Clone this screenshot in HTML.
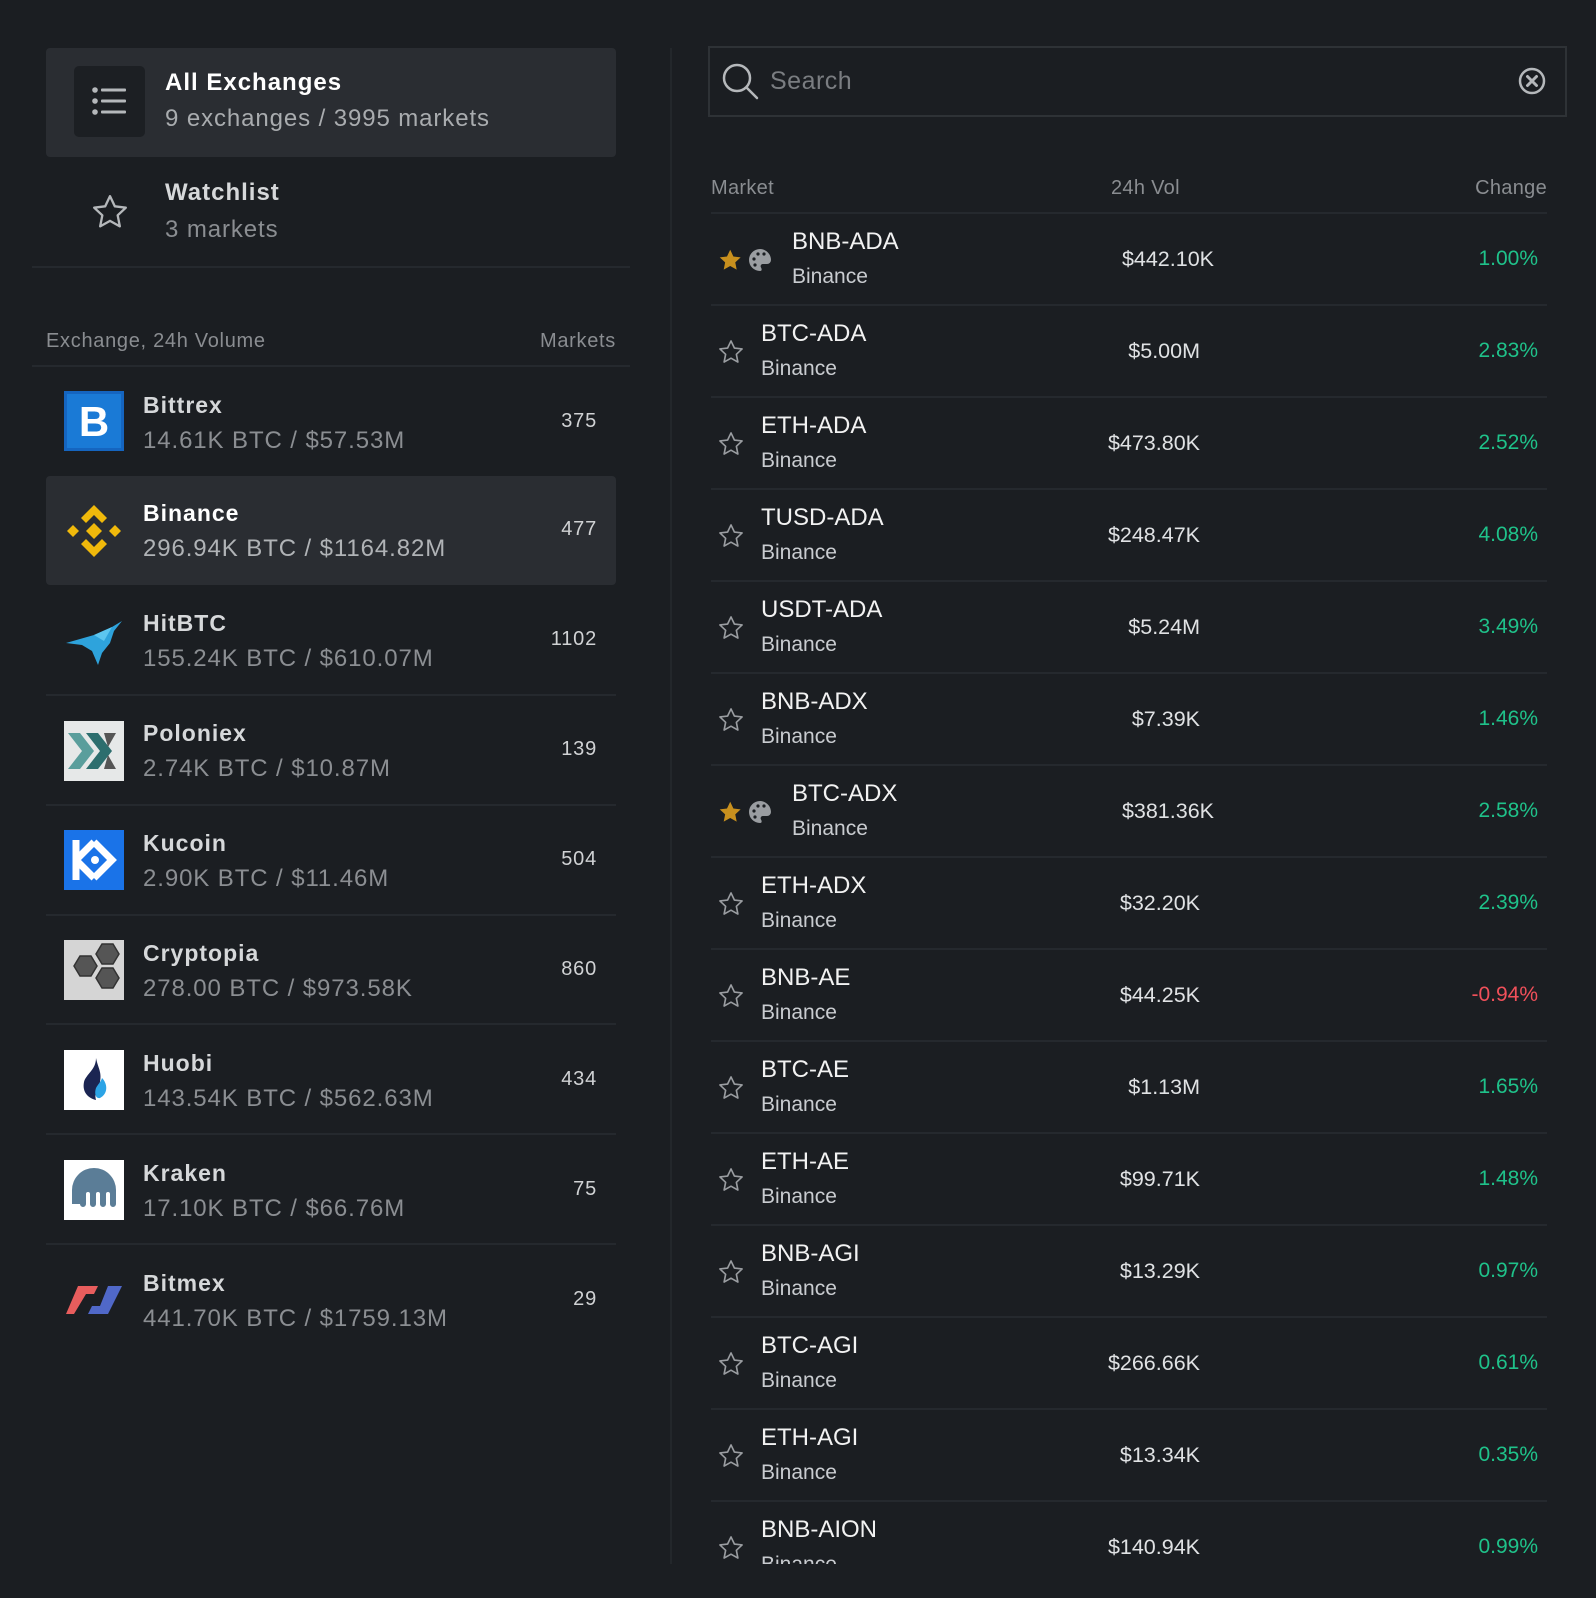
<!DOCTYPE html>
<html><head><meta charset="utf-8"><style>
*{box-sizing:border-box;margin:0;padding:0}
body{width:1596px;height:1598px;background:#1b1e22;font-family:"Liberation Sans",sans-serif;position:relative;overflow:hidden;color:#e8e8e8}
.a{position:absolute;white-space:nowrap}
.hl{position:absolute;background:#2a2d32;border-radius:4px}
.ln{position:absolute;height:2px;background:#25292e}
.en{font-weight:bold;font-size:23px;color:#d6d8da;letter-spacing:1px}
.es{font-size:24px;color:#8b8e92;letter-spacing:0.9px}
.ec{font-size:20px;color:#d0d2d4;right:999px;letter-spacing:0.8px}
.logo{position:absolute;left:64px;width:60px;height:60px}
.mn{font-size:24px;color:#f2f2f2}
.ms{font-size:21px;color:#c9ccd0}
.vol{font-size:21.5px;color:#e0e2e4;text-align:right;width:200px}
.ch{font-size:21px;color:#1fc28a;text-align:right;width:200px;left:1338px}
.hd{font-size:20px;color:#8a8d91;letter-spacing:0.7px}
.r{position:absolute;left:0;width:836px;height:92px;border-top:2px solid #25292e}
.r .so{position:absolute;left:6px;top:32px}
.r .mn{position:absolute;left:50px;top:14px}
.r .ms{position:absolute;left:50px;top:51px}
.r .vol{position:absolute;left:289px;top:33px}
.r .ch{position:absolute;left:627px;top:33px}
.r.f .mn,.r.f .ms{left:81px}
.r.f .vol{left:303px}
</style></head><body>

<div class="hl" style="left:46px;top:48px;width:570px;height:109px"></div>
<div class="a" style="left:74px;top:66px;width:71px;height:71px;background:#1c1f23;border-radius:5px"></div>
<svg class="a" style="left:90px;top:84px" width="40" height="36" viewBox="0 0 40 36">
<g fill="#b5b8bb"><circle cx="5" cy="6" r="2.8"/><circle cx="5" cy="17" r="2.8"/><circle cx="5" cy="28" r="2.8"/>
<rect x="11" y="4.5" width="25" height="3" rx="1"/><rect x="11" y="15.5" width="25" height="3" rx="1"/><rect x="11" y="26.5" width="25" height="3" rx="1"/></g></svg>
<div class="a" style="left:165px;top:69px;font-size:24px;font-weight:bold;color:#fff;letter-spacing:1px">All Exchanges</div>
<div class="a" style="left:165px;top:105px;font-size:24px;color:#a9acaf;letter-spacing:0.9px">9 exchanges / 3995 markets</div>

<svg class="a" style="left:89px;top:192px" width="42" height="40" viewBox="0 0 24 24"><path d="M12 2.5l2.9 6.1 6.6.8-4.9 4.6 1.3 6.6L12 17.3l-5.9 3.3 1.3-6.6-4.9-4.6 6.6-.8z" fill="none" stroke="#b5b8bb" stroke-width="1.4" stroke-linejoin="round"/></svg>
<div class="a" style="left:165px;top:179px;font-size:24px;font-weight:bold;color:#d6d8da;letter-spacing:1px">Watchlist</div>
<div class="a" style="left:165px;top:216px;font-size:24px;color:#8b8e92;letter-spacing:0.9px">3 markets</div>
<div class="ln" style="left:32px;top:266px;width:598px"></div>

<div class="a hd" style="left:46px;top:330px">Exchange, 24h Volume</div>
<div class="a hd" style="right:980px;top:330px">Markets</div>
<div class="ln" style="left:32px;top:365px;width:598px"></div>

<div class="hl" style="left:46px;top:476px;width:570px;height:109px"></div>
<div class="ln" style="left:46px;top:694px;width:570px"></div>
<div class="ln" style="left:46px;top:804px;width:570px"></div>
<div class="ln" style="left:46px;top:914px;width:570px"></div>
<div class="ln" style="left:46px;top:1023px;width:570px"></div>
<div class="ln" style="left:46px;top:1133px;width:570px"></div>
<div class="ln" style="left:46px;top:1243px;width:570px"></div>

<svg class="logo" style="top:391px" viewBox="0 0 60 60"><rect width="60" height="60" fill="#1565c0"/><rect x="3" y="3" width="54" height="54" fill="#1e88e5" opacity=".6"/><text x="30" y="45" font-size="42" font-weight="bold" fill="#fff" text-anchor="middle" font-family="Liberation Sans">B</text></svg>
<svg class="logo" style="top:501px" viewBox="0 0 60 60"><g fill="#f0b90b"><path d="M30 4l13 13-5 5-8-8-8 8-5-5z"/><path d="M30 56l13-13-5-5-8 8-8-8-5 5z"/><path d="M30 22l8 8-8 8-8-8z"/><path d="M9 24l6 6-6 6-6-6z"/><path d="M51 24l6 6-6 6-6-6z"/></g></svg>
<svg class="logo" style="top:611px" viewBox="0 0 60 60"><path d="M2 32l28-8 18-8 10-6-8 10-4 12-8 10-4 12-6-14-10-6z" fill="#2ea3dc"/><path d="M30 24l18-8-8 14z" fill="#5cc6f0"/></svg>
<svg class="logo" style="top:721px" viewBox="0 0 60 60"><rect width="60" height="60" fill="#e6e8e8"/><path d="M4 12h12l14 18-14 18H4l14-18z" fill="#5a9e9c"/><path d="M22 12h12l14 18-14 18H22l14-18z" fill="#2d6e6e"/><path d="M40 12h12l-8 14z M40 48h12l-8-14z" fill="#555"/></svg>
<svg class="logo" style="top:830px" viewBox="0 0 60 60"><rect width="60" height="60" fill="#1a73e8"/><path d="M12 10v40M12 30l18-18M12 30l18 18M30 12l18 18-18 18" fill="none" stroke="#fff" stroke-width="7"/><circle cx="31" cy="30" r="4" fill="#fff"/></svg>
<svg class="logo" style="top:940px" viewBox="0 0 60 60"><rect width="60" height="60" fill="#d5d5d5"/><g fill="#555" stroke="#333" stroke-width="1.5"><path d="M38 4h11l6 10-6 10H38l-6-10z"/><path d="M16 16h11l6 10-6 10H16l-6-10z"/><path d="M38 28h11l6 10-6 10H38l-6-10z"/></g></svg>
<svg class="logo" style="top:1050px" viewBox="0 0 60 60"><rect width="60" height="60" fill="#fff"/><path d="M32 8c2 10 6 14 4 24-2 6-6 10-4 18-8-2-14-8-12-18 2-8 12-12 12-24z" fill="#1b2552"/><path d="M38 28c6 6 6 16-2 20-4 1-6-4-4-10 2-4 5-6 6-10z" fill="#2ca4e6"/></svg>
<svg class="logo" style="top:1160px" viewBox="0 0 60 60"><rect width="60" height="60" fill="#fff"/><path d="M8 44V30a22 22 0 0 1 44 0v14a3 3 0 0 1-6 0V34a2 2 0 0 0-4 0v10a3 3 0 0 1-6 0V34a2 2 0 0 0-4 0v10a3 3 0 0 1-6 0V34a2 2 0 0 0-4 0v10a3 3 0 0 1-6 0z" fill="#5b7d97"/></svg>
<svg class="logo" style="top:1270px" viewBox="0 0 60 60"><path d="M14 16h20l-4 8H22l-12 20H2z" fill="#e85d5d"/><path d="M44 16h14L44 44H24l4-8h8z" fill="#5068c8"/></svg>

<div class="a en" style="left:143px;top:392px">Bittrex</div><div class="a es" style="left:143px;top:427px">14.61K BTC / $57.53M</div><div class="a ec" style="top:410px">375</div>
<div class="a en" style="left:143px;top:500px;color:#fff">Binance</div><div class="a es" style="left:143px;top:535px;color:#b0b3b6">296.94K BTC / $1164.82M</div><div class="a ec" style="top:518px">477</div>
<div class="a en" style="left:143px;top:610px">HitBTC</div><div class="a es" style="left:143px;top:645px">155.24K BTC / $610.07M</div><div class="a ec" style="top:628px">1102</div>
<div class="a en" style="left:143px;top:720px">Poloniex</div><div class="a es" style="left:143px;top:755px">2.74K BTC / $10.87M</div><div class="a ec" style="top:738px">139</div>
<div class="a en" style="left:143px;top:830px">Kucoin</div><div class="a es" style="left:143px;top:865px">2.90K BTC / $11.46M</div><div class="a ec" style="top:848px">504</div>
<div class="a en" style="left:143px;top:940px">Cryptopia</div><div class="a es" style="left:143px;top:975px">278.00 BTC / $973.58K</div><div class="a ec" style="top:958px">860</div>
<div class="a en" style="left:143px;top:1050px">Huobi</div><div class="a es" style="left:143px;top:1085px">143.54K BTC / $562.63M</div><div class="a ec" style="top:1068px">434</div>
<div class="a en" style="left:143px;top:1160px">Kraken</div><div class="a es" style="left:143px;top:1195px">17.10K BTC / $66.76M</div><div class="a ec" style="top:1178px">75</div>
<div class="a en" style="left:143px;top:1270px">Bitmex</div><div class="a es" style="left:143px;top:1305px">441.70K BTC / $1759.13M</div><div class="a ec" style="top:1288px">29</div>

<div class="a" style="left:670px;top:48px;width:2px;height:1516px;background:#23272b"></div>

<div class="a" style="left:708px;top:46px;width:859px;height:71px;border:2px solid #2e3236"></div>
<svg class="a" style="left:720px;top:61px" width="40" height="40" viewBox="0 0 40 40"><circle cx="17" cy="17" r="13" fill="none" stroke="#b5b8bb" stroke-width="2.5"/><path d="M26.5 26.5L37 37" stroke="#b5b8bb" stroke-width="2.5" stroke-linecap="round"/></svg>
<div class="a" style="left:770px;top:67px;font-size:25px;color:#7a7d81;letter-spacing:0.5px">Search</div>
<svg class="a" style="left:1517px;top:66px" width="30" height="30" viewBox="0 0 30 30"><circle cx="15" cy="15" r="12" fill="none" stroke="#b5b8bb" stroke-width="2.5"/><path d="M10.5 10.5l9 9M19.5 10.5l-9 9" stroke="#b5b8bb" stroke-width="3" stroke-linecap="round"/></svg>

<div class="a hd" style="left:711px;top:177px;letter-spacing:0.3px">Market</div>
<div class="a hd" style="left:1111px;top:177px;letter-spacing:0.3px">24h Vol</div>
<div class="a hd" style="right:49px;top:177px;letter-spacing:0.3px">Change</div>

<div class="a" style="left:711px;top:212px;width:836px;height:1352px;overflow:hidden">
<div class="r f" style="top:0"><svg class="so" width="60" height="28" viewBox="0 0 60 28"><path transform="translate(0,1) scale(1.1)" d="M12 2.5l2.9 6.1 6.6.8-4.9 4.6 1.3 6.6L12 17.3l-5.9 3.3 1.3-6.6-4.9-4.6 6.6-.8z" fill="#c8901e"/><path d="M43 3a11 11 0 1 0 0 22c2 0 2-2 1-3.5s0-3.5 2-3.5h4a4 4 0 0 0 4-4c0-6-5-11-11-11z" fill="#9a9da1"/><g fill="#1b1e22"><circle cx="37" cy="13" r="1.6"/><circle cx="41" cy="8" r="1.6"/><circle cx="47" cy="8" r="1.6"/><circle cx="38" cy="19" r="1.6"/></g></svg><div class="mn">BNB-ADA</div><div class="ms">Binance</div><div class="vol">$442.10K</div><div class="ch">1.00%</div></div>
<div class="r" style="top:92px"><svg class="so" width="28" height="28" viewBox="0 0 24 24"><path d="M12 2.5l2.9 6.1 6.6.8-4.9 4.6 1.3 6.6L12 17.3l-5.9 3.3 1.3-6.6-4.9-4.6 6.6-.8z" fill="none" stroke="#9a9da1" stroke-width="1.4" stroke-linejoin="round"/></svg><div class="mn">BTC-ADA</div><div class="ms">Binance</div><div class="vol">$5.00M</div><div class="ch">2.83%</div></div>
<div class="r" style="top:184px"><svg class="so" width="28" height="28" viewBox="0 0 24 24"><path d="M12 2.5l2.9 6.1 6.6.8-4.9 4.6 1.3 6.6L12 17.3l-5.9 3.3 1.3-6.6-4.9-4.6 6.6-.8z" fill="none" stroke="#9a9da1" stroke-width="1.4" stroke-linejoin="round"/></svg><div class="mn">ETH-ADA</div><div class="ms">Binance</div><div class="vol">$473.80K</div><div class="ch">2.52%</div></div>
<div class="r" style="top:276px"><svg class="so" width="28" height="28" viewBox="0 0 24 24"><path d="M12 2.5l2.9 6.1 6.6.8-4.9 4.6 1.3 6.6L12 17.3l-5.9 3.3 1.3-6.6-4.9-4.6 6.6-.8z" fill="none" stroke="#9a9da1" stroke-width="1.4" stroke-linejoin="round"/></svg><div class="mn">TUSD-ADA</div><div class="ms">Binance</div><div class="vol">$248.47K</div><div class="ch">4.08%</div></div>
<div class="r" style="top:368px"><svg class="so" width="28" height="28" viewBox="0 0 24 24"><path d="M12 2.5l2.9 6.1 6.6.8-4.9 4.6 1.3 6.6L12 17.3l-5.9 3.3 1.3-6.6-4.9-4.6 6.6-.8z" fill="none" stroke="#9a9da1" stroke-width="1.4" stroke-linejoin="round"/></svg><div class="mn">USDT-ADA</div><div class="ms">Binance</div><div class="vol">$5.24M</div><div class="ch">3.49%</div></div>
<div class="r" style="top:460px"><svg class="so" width="28" height="28" viewBox="0 0 24 24"><path d="M12 2.5l2.9 6.1 6.6.8-4.9 4.6 1.3 6.6L12 17.3l-5.9 3.3 1.3-6.6-4.9-4.6 6.6-.8z" fill="none" stroke="#9a9da1" stroke-width="1.4" stroke-linejoin="round"/></svg><div class="mn">BNB-ADX</div><div class="ms">Binance</div><div class="vol">$7.39K</div><div class="ch">1.46%</div></div>
<div class="r f" style="top:552px"><svg class="so" width="60" height="28" viewBox="0 0 60 28"><path transform="translate(0,1) scale(1.1)" d="M12 2.5l2.9 6.1 6.6.8-4.9 4.6 1.3 6.6L12 17.3l-5.9 3.3 1.3-6.6-4.9-4.6 6.6-.8z" fill="#c8901e"/><path d="M43 3a11 11 0 1 0 0 22c2 0 2-2 1-3.5s0-3.5 2-3.5h4a4 4 0 0 0 4-4c0-6-5-11-11-11z" fill="#9a9da1"/><g fill="#1b1e22"><circle cx="37" cy="13" r="1.6"/><circle cx="41" cy="8" r="1.6"/><circle cx="47" cy="8" r="1.6"/><circle cx="38" cy="19" r="1.6"/></g></svg><div class="mn">BTC-ADX</div><div class="ms">Binance</div><div class="vol">$381.36K</div><div class="ch">2.58%</div></div>
<div class="r" style="top:644px"><svg class="so" width="28" height="28" viewBox="0 0 24 24"><path d="M12 2.5l2.9 6.1 6.6.8-4.9 4.6 1.3 6.6L12 17.3l-5.9 3.3 1.3-6.6-4.9-4.6 6.6-.8z" fill="none" stroke="#9a9da1" stroke-width="1.4" stroke-linejoin="round"/></svg><div class="mn">ETH-ADX</div><div class="ms">Binance</div><div class="vol">$32.20K</div><div class="ch">2.39%</div></div>
<div class="r" style="top:736px"><svg class="so" width="28" height="28" viewBox="0 0 24 24"><path d="M12 2.5l2.9 6.1 6.6.8-4.9 4.6 1.3 6.6L12 17.3l-5.9 3.3 1.3-6.6-4.9-4.6 6.6-.8z" fill="none" stroke="#9a9da1" stroke-width="1.4" stroke-linejoin="round"/></svg><div class="mn">BNB-AE</div><div class="ms">Binance</div><div class="vol">$44.25K</div><div class="ch" style="color:#f0505a">-0.94%</div></div>
<div class="r" style="top:828px"><svg class="so" width="28" height="28" viewBox="0 0 24 24"><path d="M12 2.5l2.9 6.1 6.6.8-4.9 4.6 1.3 6.6L12 17.3l-5.9 3.3 1.3-6.6-4.9-4.6 6.6-.8z" fill="none" stroke="#9a9da1" stroke-width="1.4" stroke-linejoin="round"/></svg><div class="mn">BTC-AE</div><div class="ms">Binance</div><div class="vol">$1.13M</div><div class="ch">1.65%</div></div>
<div class="r" style="top:920px"><svg class="so" width="28" height="28" viewBox="0 0 24 24"><path d="M12 2.5l2.9 6.1 6.6.8-4.9 4.6 1.3 6.6L12 17.3l-5.9 3.3 1.3-6.6-4.9-4.6 6.6-.8z" fill="none" stroke="#9a9da1" stroke-width="1.4" stroke-linejoin="round"/></svg><div class="mn">ETH-AE</div><div class="ms">Binance</div><div class="vol">$99.71K</div><div class="ch">1.48%</div></div>
<div class="r" style="top:1012px"><svg class="so" width="28" height="28" viewBox="0 0 24 24"><path d="M12 2.5l2.9 6.1 6.6.8-4.9 4.6 1.3 6.6L12 17.3l-5.9 3.3 1.3-6.6-4.9-4.6 6.6-.8z" fill="none" stroke="#9a9da1" stroke-width="1.4" stroke-linejoin="round"/></svg><div class="mn">BNB-AGI</div><div class="ms">Binance</div><div class="vol">$13.29K</div><div class="ch">0.97%</div></div>
<div class="r" style="top:1104px"><svg class="so" width="28" height="28" viewBox="0 0 24 24"><path d="M12 2.5l2.9 6.1 6.6.8-4.9 4.6 1.3 6.6L12 17.3l-5.9 3.3 1.3-6.6-4.9-4.6 6.6-.8z" fill="none" stroke="#9a9da1" stroke-width="1.4" stroke-linejoin="round"/></svg><div class="mn">BTC-AGI</div><div class="ms">Binance</div><div class="vol">$266.66K</div><div class="ch">0.61%</div></div>
<div class="r" style="top:1196px"><svg class="so" width="28" height="28" viewBox="0 0 24 24"><path d="M12 2.5l2.9 6.1 6.6.8-4.9 4.6 1.3 6.6L12 17.3l-5.9 3.3 1.3-6.6-4.9-4.6 6.6-.8z" fill="none" stroke="#9a9da1" stroke-width="1.4" stroke-linejoin="round"/></svg><div class="mn">ETH-AGI</div><div class="ms">Binance</div><div class="vol">$13.34K</div><div class="ch">0.35%</div></div>
<div class="r" style="top:1288px"><svg class="so" width="28" height="28" viewBox="0 0 24 24"><path d="M12 2.5l2.9 6.1 6.6.8-4.9 4.6 1.3 6.6L12 17.3l-5.9 3.3 1.3-6.6-4.9-4.6 6.6-.8z" fill="none" stroke="#9a9da1" stroke-width="1.4" stroke-linejoin="round"/></svg><div class="mn">BNB-AION</div><div class="ms">Binance</div><div class="vol">$140.94K</div><div class="ch">0.99%</div></div>
</div>
</body></html>
